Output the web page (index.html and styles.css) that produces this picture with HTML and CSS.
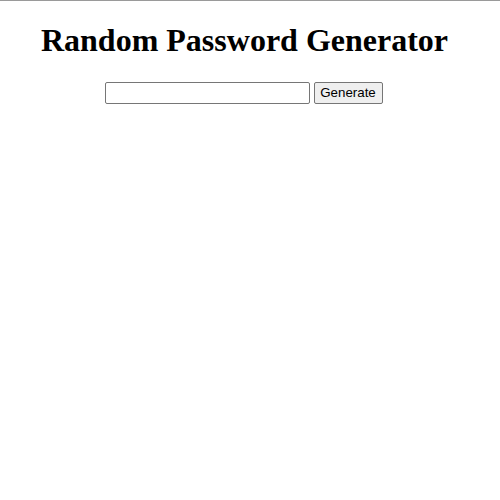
FILE: index.html
```html
<!DOCTYPE html>
<html>
<head>
<meta charset="utf-8">
<link rel="stylesheet" href="styles.css">
</head>
<body>
<div class="page">
  <h1 class="title">Random Password Generator</h1>
  <div class="controls">
    <input type="text" class="password" id="password">
    <button class="generate">Generate</button>
  </div>
</div>
</body>
</html>
```
FILE: styles.css
```css
html, body {
  margin: 0;
  padding: 0;
  background: #fff;
}
html {
  border-top: 1px solid #9a9a9a;
}
body {
  font-family: "Liberation Serif", serif;
}
.page {
  width: 489px;
  text-align: center;
  padding-top: 1px;
}
.title {
  font-size: 32px;
  font-weight: bold;
  margin: 20.44px 0 22.44px;
}
.controls {
  font-family: "Liberation Sans", sans-serif;
  font-size: 13.33px;
  display: flex;
  justify-content: center;
  gap: 4px;
  padding-right: 2px;
}
.password {
  width: 205px;
  height: 22px;
  box-sizing: border-box;
  font-family: "Liberation Sans", sans-serif;
  font-size: 13.33px;
  border: 1px solid #767676;
  border-radius: 2px;
  padding: 1px 2px;
  margin: 0;
}
.generate {
  width: 69px;
  height: 22px;
  box-sizing: border-box;
  font-family: "Liberation Sans", sans-serif;
  font-size: 13.33px;
  color: #000;
  background: #efefef;
  border: 1px solid #767676;
  border-radius: 2px;
  padding: 1px 0;
  margin: 0;
}
```
